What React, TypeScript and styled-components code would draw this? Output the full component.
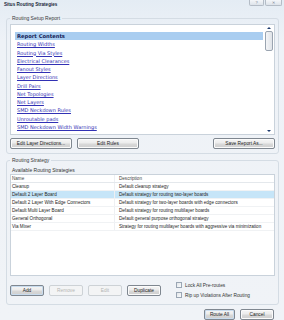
import React from 'react';
import styled, { createGlobalStyle } from 'styled-components';

const GlobalStyle = createGlobalStyle`
  html, body {
    margin: 0;
    padding: 0;
    background: #eef2f6;
  }
  * {
    box-sizing: border-box;
  }
`;

const UI_FONT = `"Liberation Sans", Arial, sans-serif`;

const Window = styled.div`
  width: 284px;
  height: 320px;
  overflow: hidden;
  display: flex;
  flex-direction: column;
  font-family: ${UI_FONT};
  color: #1e1e1e;
  background: linear-gradient(180deg, #e4ecf4 0px, #eef2f7 40px, #f0f3f7 100%);
`;

const TitleBar = styled.div`
  height: 15px;
  display: flex;
  justify-content: space-between;
  align-items: flex-start;
  padding-left: 4px;
`;

const Title = styled.div`
  font-size: 4.6px;
  font-weight: 700;
  line-height: 10px;
  color: #1b2a3c;
`;

const CaptionButtons = styled.div`
  display: flex;
  gap: 1px;
  padding-right: 2px;
`;

const CaptionButton = styled.div<{ $width: number }>`
  width: ${({ $width }) => $width}px;
  height: 6px;
  border: 1px solid #b4bcc6;
  border-top: none;
  border-radius: 0 0 2px 2px;
  background: linear-gradient(180deg, #f4f6f9, #dde3ea);
  font-size: 4px;
  line-height: 5px;
  text-align: center;
  color: #7b8794;
`;

const Body = styled.div`
  flex: 1;
  display: flex;
  flex-direction: column;
  padding: 0 5px 0 6px;
`;

const Group = styled.fieldset<{ $gap?: number }>`
  margin: ${({ $gap }) => $gap ?? 0}px 0 0 0;
  padding: 0 3px 4px 3px;
  border: 1px solid #d4dce4;
  border-radius: 3px;
  min-width: 0;
`;

const Legend = styled.legend`
  padding: 0 2px;
  margin-left: 0;
  font-size: 5px;
  line-height: 8px;
  color: #3a3a3a;
`;

const ReportBox = styled.div`
  margin-top: 2px;
  height: 111px;
  background: #ffffff;
  border: 1px solid #c9d2db;
  display: flex;
`;

const ReportContent = styled.div`
  flex: 1;
  padding: 7px 0 0 4px;
  font-family: "DejaVu Sans", Verdana, sans-serif;
`;

const ReportItem = styled.div<{ $heading?: boolean }>`
  height: 8.27px;
  line-height: 8.27px;
  padding-left: 2px;
  font-size: ${({ $heading }) => ($heading ? 5.2 : 5)}px;
  font-weight: ${({ $heading }) => ($heading ? 700 : 400)};
  color: ${({ $heading }) => ($heading ? '#101a55' : '#3131b4')};
  text-decoration: ${({ $heading }) => ($heading ? 'none' : 'underline')};
  background: ${({ $heading }) => ($heading ? '#a9cdf0' : 'transparent')};
  white-space: nowrap;
`;

const Scrollbar = styled.div`
  width: 11px;
  display: flex;
  flex-direction: column;
  align-items: center;
  padding: 2px 0 2px 0;
`;

const ScrollArrow = styled.div<{ $down?: boolean }>`
  width: 0;
  height: 0;
  border-left: 2px solid transparent;
  border-right: 2px solid transparent;
  ${({ $down }) =>
    $down ? 'border-top: 2px solid #1c3a6e;' : 'border-bottom: 2px solid #1c3a6e;'}
`;

const ScrollTrack = styled.div`
  flex: 1;
  width: 100%;
  padding: 2px 1.5px 0;
`;

const ScrollThumb = styled.div`
  height: 20px;
  border: 1px solid #9aa4b0;
  border-radius: 2px;
  background: linear-gradient(90deg, #f4f5f7, #dfe3e8);
`;

const ButtonRow = styled.div<{ $top: number }>`
  display: flex;
  align-items: center;
  gap: 5px;
  margin-top: ${({ $top }) => $top}px;
`;

const Spacer = styled.div`
  flex: 1;
`;

const Button = styled.button<{ $width: number; $primary?: boolean }>`
  width: ${({ $width }) => $width}px;
  height: 11px;
  padding: 0;
  font-family: ${UI_FONT};
  font-size: 4.8px;
  line-height: 9px;
  color: #222;
  border: 1px solid #7f8790;
  border-radius: 2px;
  background: linear-gradient(180deg, #f6f6f6 0%, #ebebeb 48%, #d9d9d9 52%, #cfcfcf 100%);
  box-shadow: ${({ $primary }) => ($primary ? 'inset 0 0 0 1px #c9dcee' : 'inset 0 0 0 1px #fbfbfb')};

  &:disabled {
    color: #b4b4b4;
    border-color: #cdd2d6;
    background: #f3f4f5;
    box-shadow: none;
  }
`;

const Caption = styled.div`
  margin-top: 2px;
  font-size: 5px;
  line-height: 8px;
  color: #333;
  padding-left: 2px;
`;

const Table = styled.div`
  height: 102px;
  background: #ffffff;
  border: 1px solid #c9d2db;
  font-size: 4.6px;
`;

const TableRow = styled.div<{ $header?: boolean; $selected?: boolean }>`
  display: grid;
  grid-template-columns: 104px 1fr;
  height: 8px;
  line-height: 8px;
  color: ${({ $header }) => ($header ? '#444' : '#1e1e1e')};
  background: ${({ $selected }) => ($selected ? '#c6e5f8' : '#ffffff')};
  border-bottom: 1px solid ${({ $header }) => ($header ? '#e4e8ec' : '#f0f2f4')};
  white-space: nowrap;
`;

const Cell = styled.div<{ $first?: boolean }>`
  padding-left: ${({ $first }) => ($first ? 1 : 4)}px;
  overflow: hidden;
  border-right: ${({ $first }) => ($first ? '1px solid #eef0f3' : 'none')};
`;

const BottomArea = styled.div`
  display: flex;
  align-items: center;
  margin-top: 4px;
  height: 20px;
`;

const Checks = styled.div`
  display: flex;
  flex-direction: column;
  margin-left: 15px;
`;

const CheckRow = styled.label`
  display: flex;
  align-items: center;
  gap: 3px;
  height: 10px;
  font-size: 4.8px;
  color: #333;
`;

const CheckBox = styled.span`
  width: 6px;
  height: 6px;
  border: 1px solid #9aa6b4;
  background: linear-gradient(135deg, #e2e6ea, #fafbfc);
`;

const Footer = styled.div`
  display: flex;
  justify-content: flex-end;
  gap: 5px;
  padding: 4px 5px 0 0;
`;

const reportItems = [
  'Routing Widths',
  'Routing Via Styles',
  'Electrical Clearances',
  'Fanout Styles',
  'Layer Directions',
  'Drill Pairs',
  'Net Topologies',
  'Net Layers',
  'SMD Neckdown Rules',
  'Unroutable pads',
  'SMD Neckdown Width Warnings',
];

const strategies = [
  ['Cleanup', 'Default cleanup strategy'],
  ['Default 2 Layer Board', 'Default strategy for routing two-layer boards'],
  ['Default 2 Layer With Edge Connectors', 'Default strategy for two-layer boards with edge connectors'],
  ['Default Multi Layer Board', 'Default strategy for routing multilayer boards'],
  ['General Orthogonal', 'Default general purpose orthogonal strategy'],
  ['Via Mixer', 'Strategy for routing multilayer boards with aggressive via minimization'],
];

export default function App() {
  return (
    <Window>
      <GlobalStyle />
      <TitleBar>
        <Title>Situs Routing Strategies</Title>
        <CaptionButtons>
          <CaptionButton $width={15}>?</CaptionButton>
          <CaptionButton $width={17}>✕</CaptionButton>
        </CaptionButtons>
      </TitleBar>
      <Body>
        <Group>
          <Legend>Routing Setup Report</Legend>
          <ReportBox>
            <ReportContent>
              <ReportItem $heading>Report Contents</ReportItem>
              {reportItems.map((item) => (
                <ReportItem key={item}>{item}</ReportItem>
              ))}
            </ReportContent>
            <Scrollbar>
              <ScrollArrow />
              <ScrollTrack>
                <ScrollThumb />
              </ScrollTrack>
              <ScrollArrow $down />
            </Scrollbar>
          </ReportBox>
          <ButtonRow $top={3}>
            <Button $width={62}>Edit Layer Directions...</Button>
            <Button $width={62}>Edit Rules</Button>
            <Spacer />
            <Button $width={62}>Save Report As...</Button>
          </ButtonRow>
        </Group>
        <Group $gap={2}>
          <Legend>Routing Strategy</Legend>
          <Caption>Available Routing Strategies</Caption>
          <Table>
            <TableRow $header>
              <Cell $first>Name</Cell>
              <Cell>Description</Cell>
            </TableRow>
            {strategies.map(([name, desc], i) => (
              <TableRow key={name} $selected={i === 1}>
                <Cell $first>{name}</Cell>
                <Cell>{desc}</Cell>
              </TableRow>
            ))}
          </Table>
          <BottomArea>
            <ButtonRow $top={0}>
              <Button $width={34} $primary>Add</Button>
              <Button $width={34} disabled>Remove</Button>
              <Button $width={34} disabled>Edit</Button>
              <Button $width={34}>Duplicate</Button>
            </ButtonRow>
            <Checks>
              <CheckRow>
                <CheckBox />
                Lock All Pre-routes
              </CheckRow>
              <CheckRow>
                <CheckBox />
                Rip up Violations After Routing
              </CheckRow>
            </Checks>
          </BottomArea>
        </Group>
        <Footer>
          <Button $width={31} $primary>Route All</Button>
          <Button $width={34}>Cancel</Button>
        </Footer>
      </Body>
    </Window>
  );
}
